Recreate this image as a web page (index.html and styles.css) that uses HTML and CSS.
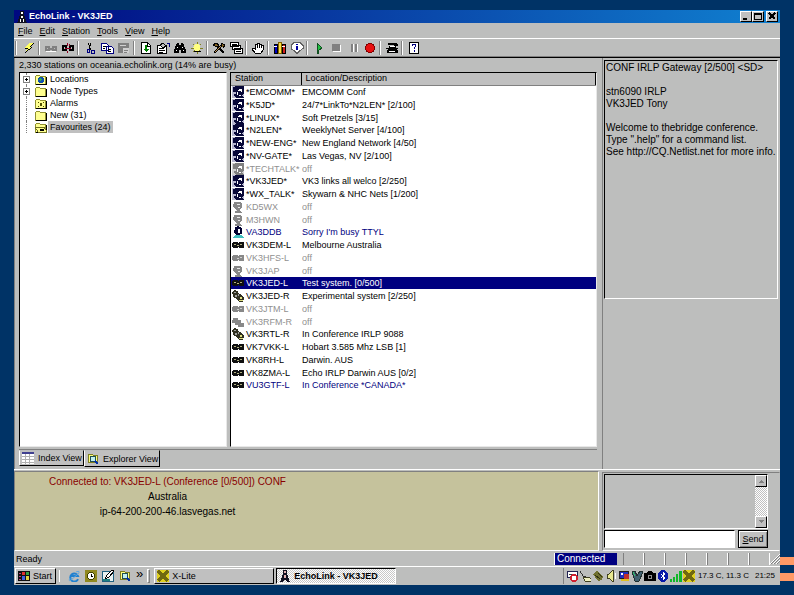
FILE: index.html
```html
<!DOCTYPE html>
<html lang="en">
<head>
<meta charset="utf-8">
<title>EchoLink - VK3JED</title>
<link rel="stylesheet" href="styles.css">
</head>
<body>
<svg class="sprite" aria-hidden="true">
  <symbol id="bolt" viewBox="0 0 14 12"><path d="M8 1h4L9 5h2L3 11l2-4H3z" fill="#000"/><path d="M7 1h4L8 5h2L4 9l2-3H3z" fill="#ffff60"/></symbol>
  <symbol id="chain-off" viewBox="0 0 14 12"><path d="M2 5h3v3H2zM9 5h3v3H9zM5 6.500h4" fill="none" stroke="#808080" stroke-width="2"/><path d="M2 9h10" stroke="#fff"/></symbol>
  <symbol id="chain-cut" viewBox="0 0 14 12"><path d="M2 4h3v4H2zM9 4h3v4H9z" fill="none" stroke="#000" stroke-width="2"/><path d="M4 6h6M6 1l1 3M9 2L8 4M6 11V9" stroke="#900020"/></symbol>
  <symbol id="cut" viewBox="0 0 14 12"><path d="M5 1l3 7M8 1L6 7" stroke="#000"/><path d="M4 7h2v3H4zM8 8h3v3H8z" fill="none" stroke="#000080"/></symbol>
  <symbol id="copy" viewBox="0 0 14 12"><path d="M1 1h5l2 2v5H1zM6 4h5l2 2v5H6z" fill="#fff" stroke="#000080"/><path d="M3 4h3M3 6h2M8 7h3M8 9h3" stroke="#000"/></symbol>
  <symbol id="paste" viewBox="0 0 14 12"><path d="M1 1h11v10H1z" fill="#808080"/><path d="M3 3h6v1H3zM6 6h6v5H6z" fill="#d0d0d0"/><path d="M7 8h4M7 10h3" stroke="#808080"/></symbol>
  <symbol id="page" viewBox="0 0 14 12"><path d="M2.500 .5h6l3 3v8h-9z" fill="#fff" stroke="#000"/><path d="M8.500 1v3h3" stroke="#000" fill="none"/><path d="M6 3h2v4h2L7 10 4 7h2z" fill="#008000"/></symbol>
  <symbol id="props" viewBox="0 0 14 12"><path d="M1.500 3.500h9v8h-9z" fill="#fff" stroke="#000"/><path d="M3 6h5M3 8h6M3 10h4M4 3l3-2 3 3-3 2z" stroke="#000" fill="#c0c0c0"/><path d="M11 1h2v4" stroke="#000080" fill="none"/></symbol>
  <symbol id="find" viewBox="0 0 14 12"><path d="M4 1h2v2h2V1h2l3 7v3H8V8H6v3H1V8z" fill="#000"/><path d="M3 8h1M4 5h1M9 5h1M10 8h1" stroke="#fff"/></symbol>
  <symbol id="alarm" viewBox="0 0 14 12"><path d="M7 0v12M1 6h12M3 2l8 8M11 2l-8 8" stroke="#808020"/><circle cx="7" cy="5.500" r="3.500" fill="#ffff80"/><path d="M4 9h7" stroke="#000"/></symbol>
  <symbol id="tools" viewBox="0 0 14 12"><path d="M2 11l8-8M4 3l8 8" stroke="#000" stroke-width="2"/><path d="M1 3l3-2 3 2-2 2zM9 1l4 2-2 3" fill="#806020" stroke="#000"/><path d="M3 10l6-6" stroke="#c09050"/></symbol>
  <symbol id="windows" viewBox="0 0 14 12"><path d="M1.500 .5h8v4h-8zM3.500 3.500h8v4h-8zM5.500 6.500h8v5h-8z" fill="#fff" stroke="#000"/><path d="M3 2.500h5M7 9.500h5" stroke="#000"/></symbol>
  <symbol id="hand" viewBox="0 0 14 12"><path d="M4 11L1 7l1-1 2 1V2h2V1h2v1h2v1h2v5l-2 3z" fill="#fff" stroke="#000"/><path d="M6 2v4M8 2v4M10 3v3" stroke="#000"/></symbol>
  <symbol id="books" viewBox="0 0 14 12"><path d="M1 2h3v9H1z" fill="#0000c0" stroke="#000"/><path d="M5 0h3v11H5z" fill="#ffe040" stroke="#806000"/><path d="M9 2h3v9H9z" fill="#d02020" stroke="#000"/><path d="M1 4h3M9 4h3" stroke="#fff"/></symbol>
  <symbol id="info" viewBox="0 0 14 12"><path d="M4 .5h6l3 3v3l-4 3-2 2-2-2-4-3v-3z" fill="#fff" stroke="#606060"/><path d="M6 2h2v1H6zM6 4h2v4H6z" fill="#0000a0"/></symbol>
  <symbol id="play" viewBox="0 0 14 12"><path d="M5 1l5 5-4 3v3H5z" fill="#20c040" stroke="#105020"/></symbol>
  <symbol id="stop" viewBox="0 0 14 12"><path d="M4 3h8v7H4z" fill="#fff"/><path d="M3 2h8v7H3z" fill="#808080"/></symbol>
  <symbol id="pause" viewBox="0 0 14 12"><path d="M5 2h2v8H5zM9 2h2v8H9z" fill="#808080"/><path d="M7 2h1v8H7zM11 2h1v8h-1z" fill="#fff"/></symbol>
  <symbol id="record" viewBox="0 0 14 12"><circle cx="7" cy="6" r="4.500" fill="#e81010" stroke="#800000"/></symbol>
  <symbol id="phone" viewBox="0 0 14 12"><path d="M3 3V1h8l2 2v1H9V3zM1 6h12v1H1zM3 7h8l2 2v2H2V9z" fill="#000"/><path d="M4 4h7v2H4z" fill="#000"/><path d="M5 4.500h5M4 9.500h6" stroke="#fff"/></symbol>
  <symbol id="help" viewBox="0 0 14 12"><path d="M2.500 .5h9v11h-9z" fill="#fff" stroke="#000"/><path d="M5 2h4v1H5zM5 3h1v1H5zM8 3h1v2H8zM7 5h1v2H7zM7 8h1v2H7z" fill="#000080"/></symbol>

  <symbol id="folder" viewBox="0 0 12 11"><path d="M.5 2.500l1-1h3l1 1h5v8H.5z" fill="#ffff90" stroke="#909030"/><path d="M11.500 3v7.500H1" stroke="#000" fill="none"/></symbol>
  <symbol id="folder-globe" viewBox="0 0 12 11"><use href="#folder"/><circle cx="6" cy="6" r="3" fill="#1050b0"/><path d="M5 4l2 1-1 3-2-2z" fill="#30b050"/></symbol>
  <symbol id="folder-alarm" viewBox="0 0 12 11"><use href="#folder"/><path d="M3 4h1v1H3zM8 4h1v1H8zM5 5h2v3H5zM3 8h1v1H3zM8 8h1v1H8z" fill="#505000"/></symbol>
  <symbol id="folder-open" viewBox="0 0 12 11"><use href="#folder"/><path d="M0 5h9l3 5H3z" fill="#ffff90" stroke="#707020"/><path d="M5 7h4v2H5z" fill="#000"/></symbol>

  <symbol id="conf" viewBox="0 0 12 12"><path d="M0 0h12v12H0z" fill="#b8b8d0"/><path d="M3 0h9v8l-2 1 2 3H4L2 10V8h2V6H1V1h2z" fill="#080838"/><path d="M7 3h2l1 1v2H9L8 5H6z" fill="#fff"/><path d="M5 6h1v3H5zM7 9h2v1H7z" fill="#fff"/></symbol>
  <symbol id="conf-off" viewBox="0 0 12 12"><path d="M0 0h12v12H0z" fill="#d0d0d0"/><path d="M3 0h9v8l-2 1 2 3H4L2 10V8h2V6H1V1h2z" fill="#808080"/><path d="M7 3h2l1 1v2H9L8 5H6zM5 6h1v3H5zM7 9h2v1H7z" fill="#fff"/></symbol>
  <symbol id="user-off" viewBox="0 0 12 12"><path d="M2 1h6l2 2v4L8 8v1l2 3H3l1-3-1-2-2-1z" fill="#888"/><path d="M5 3h3v1H5zM6 6h2v1H6zM4 9h1v1H4z" fill="#e8e8e8"/></symbol>
  <symbol id="user" viewBox="0 0 12 12"><path d="M3 1l3-1 4 2v6H8L7 9H5L2 7z" fill="#000030"/><path d="M6 3h2v4H6z" fill="#fff"/><path d="M1 12l2-3h6l3 3z" fill="#40c0c0"/></symbol>
  <symbol id="link" viewBox="0 0 12 12"><path d="M1 3h4l1 1 1-1h4l1 1v4l-1 1H7L6 8 5 9H1L0 8V4z" fill="#101010"/><path d="M2 5h2v1H2zM5 6h2v1H5zM8 5h2v1H8z" fill="#b0b080"/></symbol>
  <symbol id="link-off" viewBox="0 0 12 12"><path d="M1 3h4l1 1 1-1h4l1 1v4l-1 1H7L6 8 5 9H1L0 8V4z" fill="#888"/><path d="M5 6h2v1H5zM8 5h2v1H8z" fill="#d0d0d0"/></symbol>
  <symbol id="radio" viewBox="0 0 12 12"><path d="M0 2l2-2 4 1 1 3 3 1 2 3-1 4H7L5 9 2 8z" fill="#303020"/><path d="M2 2h2v1H2zM3 5h2v2H3zM6 4h1v2H6z" fill="#a0a0a0"/><path d="M8 7h2v2H8zM7 10h4v1H7z" fill="#e0e080"/></symbol>
  <symbol id="radio-off" viewBox="0 0 12 12"><path d="M1 2h5v2h3v3h3v4H6V9H3V7H0z" fill="#888"/></symbol>

  <symbol id="app" viewBox="0 0 12 12"><path d="M4 0h4v4l3 8H8L6 9l-2 3H1l3-8z" fill="#101020"/><path d="M5 1h2v2H5zM5 5h2v3H5z" fill="#e0b0b0"/></symbol>
  <symbol id="app-light" viewBox="0 0 12 12"><path d="M4 0h4v4l3 8H1l3-8z" fill="#101020"/><path d="M5 1h2v2H5zM5 5h2v2H5zM4 8h1v3H4zM7 8h1v3H7z" fill="#fff"/></symbol>
  <symbol id="grid" viewBox="0 0 12 12"><path d="M0 0h12v12H0z" fill="#fff"/><path d="M0 0h12v2H0z" fill="#404090"/><path d="M0 4.500h12M0 7.500h12M0 10.500h12M3.500 2v10M7.500 2v10" stroke="#b0b0b0"/></symbol>
  <symbol id="explore" viewBox="0 0 12 12"><path d="M1 1h4l1 1h4v7H1z" fill="#ffff80" stroke="#808020"/><circle cx="6" cy="6" r="3" fill="#c0f0f0" stroke="#205050"/><path d="M8 8l3 3" stroke="#0030a0" stroke-width="2"/></symbol>
  <symbol id="winflag" viewBox="0 0 12 12"><path d="M0 1h12v10H0z" fill="#101010"/><path d="M4 2h3v3H4z" fill="#e03030"/><path d="M8 2h3v3H8z" fill="#30a040"/><path d="M4 6h3v4H4z" fill="#4060e0"/><path d="M8 6h3v4H8z" fill="#e0d040"/><path d="M1 3h2M1 6h2M1 9h2" stroke="#c04080"/></symbol>
  <symbol id="ie" viewBox="0 0 12 12"><g shape-rendering="auto"><path d="M10 9A4 4 0 1 1 10 6H3" fill="none" stroke="#2080d0" stroke-width="2"/><path d="M2 8Q0 12 3 10L10 4Q13 0 8 2" fill="none" stroke="#60a8e0"/></g></symbol>
  <symbol id="outlook" viewBox="0 0 12 12"><path d="M0 0h12v12H0z" fill="#908820"/><circle cx="6" cy="6" r="3.500" fill="#fff" stroke="#404000"/><path d="M6 4v2h2" fill="none" stroke="#000"/></symbol>
  <symbol id="desk" viewBox="0 0 12 12"><path d="M.5 1.500h11v10H.5z" fill="#e8f0f0" stroke="#206080"/><path d="M3 9l2-4 5-5 2 1-5 6z" fill="#fff" stroke="#000"/><path d="M1 10h7" stroke="#208080" stroke-width="2"/></symbol>
  <symbol id="xlite" viewBox="0 0 12 12"><path d="M0 0h12v12H0z" fill="#e0d020"/><path d="M1 1l10 10M11 1L1 11" stroke="#706810" stroke-width="3"/></symbol>
  <symbol id="t-cal" viewBox="0 0 12 12"><path d="M1 1h10v6H1z" fill="#fff" stroke="#202050"/><path d="M3 4h6" stroke="#404040"/><circle cx="8" cy="8" r="3" fill="#fff" stroke="#d02030" stroke-width="1.500"/></symbol>
  <symbol id="t-modem" viewBox="0 0 12 12"><path d="M1 1l3 5 3 1" fill="none" stroke="#303030"/><path d="M4 7h6l2 2v2H6z" fill="#f0f0c0" stroke="#404020"/></symbol>
  <symbol id="t-plug" viewBox="0 0 12 12"><path d="M1 4l4-3 6 5-1 4-4 1z" fill="#707030"/><path d="M3 5l5 4M6 3l4 4" stroke="#303010"/></symbol>
  <symbol id="t-speaker" viewBox="0 0 12 12"><path d="M2 4h2l4-4v12L4 8H2z" fill="#e8e890" stroke="#404020"/><path d="M10 3v6" stroke="#fff"/></symbol>
  <symbol id="t-pc" viewBox="0 0 12 12"><path d="M1 1h9v7H1z" fill="#2030c0" stroke="#202020"/><path d="M3 3h2v2H3z" fill="#fff"/><path d="M6 4h5v5H6z" fill="#c03030"/><path d="M3 10h8" stroke="#e0c020" stroke-width="2"/></symbol>
  <symbol id="t-pen" viewBox="0 0 12 12"><path d="M1 2l3-1 2 5 3-5 3 1-4 9H4z" fill="#406070" stroke="#203030"/><path d="M2 2l2 4" stroke="#30c070"/></symbol>
  <symbol id="t-camera" viewBox="0 0 12 12"><path d="M0 3h3l1-2h4l1 2h3v8H0z" fill="#000"/><circle cx="6" cy="7" r="2" fill="none" stroke="#909090"/></symbol>
  <symbol id="t-bt" viewBox="0 0 12 12"><ellipse cx="6" cy="6" rx="5" ry="6" fill="#0818a8"/><path d="M4 4l4 4-2 2V2l2 2-4 4" fill="none" stroke="#fff"/></symbol>
  <symbol id="t-signal" viewBox="0 0 12 12"><path d="M0 9h2v3H0zM3 7h2v5H3zM6 4h2v8H6zM9 1h3v11H9z" fill="#10b828"/></symbol>
</svg>

<div class="window">
  <header class="title">
    <svg><use href="#app-light"/></svg>
    <h1>EchoLink - VK3JED</h1>
    <button aria-label="Minimize"><svg viewBox="0 0 10 9"><path d="M2 7h4" stroke="#000" stroke-width="2"/></svg></button>
    <button aria-label="Maximize"><svg viewBox="0 0 10 9"><path d="M1.500 1.500h7v6h-7zM1 2h8" fill="none" stroke="#000"/></svg></button>
    <button class="close" aria-label="Close"><svg viewBox="0 0 10 9"><path d="M2 1l6 6M8 1L2 7" stroke="#000" stroke-width="2"/></svg></button>
  </header>

  <nav class="menu">
    <a href="#"><u>F</u>ile</a><a href="#"><u>E</u>dit</a><a href="#"><u>S</u>tation</a><a href="#"><u>T</u>ools</a><a href="#"><u>V</u>iew</a><a href="#"><u>H</u>elp</a>
  </nav>

  <div class="toolbar">
    <i></i>
    <button aria-label="Connect"><svg><use href="#bolt"/></svg></button>
    <i></i>
    <button aria-label="Link"><svg><use href="#chain-off"/></svg></button>
    <button aria-label="Disconnect"><svg><use href="#chain-cut"/></svg></button>
    <i></i>
    <button aria-label="Cut"><svg><use href="#cut"/></svg></button>
    <button aria-label="Copy"><svg><use href="#copy"/></svg></button>
    <button aria-label="Paste"><svg><use href="#paste"/></svg></button>
    <i></i>
    <button aria-label="Refresh"><svg><use href="#page"/></svg></button>
    <button aria-label="Properties"><svg><use href="#props"/></svg></button>
    <button aria-label="Find"><svg><use href="#find"/></svg></button>
    <button aria-label="Alarms"><svg><use href="#alarm"/></svg></button>
    <i></i>
    <button aria-label="Setup"><svg><use href="#tools"/></svg></button>
    <button aria-label="Preferences"><svg><use href="#windows"/></svg></button>
    <i></i>
    <button aria-label="Busy"><svg><use href="#hand"/></svg></button>
    <i></i>
    <button aria-label="Statistics"><svg><use href="#books"/></svg></button>
    <button aria-label="Information"><svg><use href="#info"/></svg></button>
    <i></i>
    <button aria-label="Play"><svg><use href="#play"/></svg></button>
    <button aria-label="Stop"><svg><use href="#stop"/></svg></button>
    <button aria-label="Pause"><svg><use href="#pause"/></svg></button>
    <button aria-label="Record"><svg><use href="#record"/></svg></button>
    <i></i>
    <button aria-label="Dial pad"><svg><use href="#phone"/></svg></button>
    <i></i>
    <button aria-label="Help"><svg><use href="#help"/></svg></button>
  </div>

  <main>
    <section class="stations">
      <p class="count">2,330 stations on oceania.echolink.org (14% are busy)</p>
      <div class="panes">
        <ul class="tree">
          <li><b></b><svg><use href="#folder-globe"/></svg><span>Locations</span></li>
          <li><b></b><svg><use href="#folder"/></svg><span>Node Types</span></li>
          <li><svg><use href="#folder-alarm"/></svg><span>Alarms</span></li>
          <li><svg><use href="#folder"/></svg><span>New (31)</span></li>
          <li><svg><use href="#folder-open"/></svg><span class="picked">Favourites (24)</span></li>
        </ul>
        <div class="list">
          <table>
            <thead><tr><th>Station</th><th>Location/Description</th></tr></thead>
            <tbody>
              <tr><td><svg><use href="#conf"/></svg>*EMCOMM*</td><td>EMCOMM Conf</td></tr>
              <tr><td><svg><use href="#conf"/></svg>*K5JD*</td><td>24/7*LinkTo*N2LEN* [2/100]</td></tr>
              <tr><td><svg><use href="#conf"/></svg>*LINUX*</td><td>Soft Pretzels [3/15]</td></tr>
              <tr><td><svg><use href="#conf"/></svg>*N2LEN*</td><td>WeeklyNet Server [4/100]</td></tr>
              <tr><td><svg><use href="#conf"/></svg>*NEW-ENG*</td><td>New England Network [4/50]</td></tr>
              <tr><td><svg><use href="#conf"/></svg>*NV-GATE*</td><td>Las Vegas, NV [2/100]</td></tr>
              <tr class="off"><td><svg><use href="#conf-off"/></svg>*TECHTALK*</td><td>off</td></tr>
              <tr><td><svg><use href="#conf"/></svg>*VK3JED*</td><td>VK3 links all welco [2/250]</td></tr>
              <tr><td><svg><use href="#conf"/></svg>*WX_TALK*</td><td>Skywarn &amp; NHC Nets [1/200]</td></tr>
              <tr class="off"><td><svg><use href="#user-off"/></svg>KD5WX</td><td>off</td></tr>
              <tr class="off"><td><svg><use href="#user-off"/></svg>M3HWN</td><td>off</td></tr>
              <tr class="busy"><td><svg><use href="#user"/></svg>VA3DDB</td><td>Sorry I'm busy TTYL</td></tr>
              <tr><td><svg><use href="#link"/></svg>VK3DEM-L</td><td>Melbourne Australia</td></tr>
              <tr class="off"><td><svg><use href="#link-off"/></svg>VK3HFS-L</td><td>off</td></tr>
              <tr class="off"><td><svg><use href="#user-off"/></svg>VK3JAP</td><td>off</td></tr>
              <tr class="selected"><td><svg><use href="#link"/></svg>VK3JED-L</td><td>Test system. [0/500]</td></tr>
              <tr><td><svg><use href="#radio"/></svg>VK3JED-R</td><td>Experimental system [2/250]</td></tr>
              <tr class="off"><td><svg><use href="#link-off"/></svg>VK3JTM-L</td><td>off</td></tr>
              <tr class="off"><td><svg><use href="#radio-off"/></svg>VK3RFM-R</td><td>off</td></tr>
              <tr><td><svg><use href="#radio"/></svg>VK3RTL-R</td><td>In Conference IRLP 9088</td></tr>
              <tr><td><svg><use href="#link"/></svg>VK7VKK-L</td><td>Hobart 3.585 Mhz LSB [1]</td></tr>
              <tr><td><svg><use href="#link"/></svg>VK8RH-L</td><td>Darwin. AUS</td></tr>
              <tr><td><svg><use href="#link"/></svg>VK8ZMA-L</td><td>Echo IRLP Darwin AUS [0/2]</td></tr>
              <tr class="busy"><td><svg><use href="#link"/></svg>VU3GTF-L</td><td>In Conference *CANADA*</td></tr>
            </tbody>
          </table>
        </div>
      </div>
      <div class="tabs">
        <button><svg><use href="#grid"/></svg>Index View</button>
        <button class="current"><svg><use href="#explore"/></svg>Explorer View</button>
      </div>
    </section>
    <aside class="info">
      <div class="message">
        <p>CONF IRLP Gateway [2/500] &lt;SD&gt;</p>
        <p>stn6090 IRLP<br>VK3JED Tony</p>
        <p>Welcome to thebridge conference.<br>Type ".help" for a command list.<br>See http://CQ.Netlist.net for more info.</p>
      </div>
    </aside>
  </main>

  <div class="lower">
    <section class="connection">
      <p class="peer">Connected to: VK3JED-L (Conference [0/500]) CONF</p>
      <p>Australia</p>
      <p>ip-64-200-200-46.lasvegas.net</p>
    </section>
    <form class="chat">
      <div class="log">
        <div class="scroll"><button type="button" aria-label="Scroll up"><svg viewBox="0 0 8 8"><path d="M1 6h6L4 3z" fill="#808080"/></svg></button><button type="button" aria-label="Scroll down"><svg viewBox="0 0 8 8"><path d="M1 2h6L4 5z" fill="#808080"/></svg></button></div>
      </div>
      <div class="entry"><input type="text" aria-label="Message"><button type="button"><u>S</u>end</button></div>
    </form>
  </div>

  <footer class="status">
    <span class="ready">Ready</span>
    <span class="state">Connected</span>
    <span></span><span></span><span></span><span></span><span></span><span></span><span></span>
    <svg viewBox="0 0 10 10"><path d="M1 10l9-9M4 10l6-6M7 10l3-3" stroke="#808080"/><path d="M0 10l10-10M3 10l7-7M6 10l4-4" stroke="#fff"/></svg>
  </footer>

  <nav class="taskbar">
    <button class="start"><svg><use href="#winflag"/></svg>Start</button>
    <div class="quick">
      <svg><use href="#ie"/></svg><svg><use href="#outlook"/></svg><svg><use href="#desk"/></svg><svg><use href="#explore"/></svg><span>»</span>
    </div>
    <i></i>
    <button class="task"><svg><use href="#xlite"/></svg>X-Lite</button>
    <button class="task active"><svg><use href="#app"/></svg>EchoLink - VK3JED</button>
    <div class="tray">
      <svg><use href="#t-cal"/></svg><svg><use href="#t-modem"/></svg><svg><use href="#t-plug"/></svg><svg><use href="#t-speaker"/></svg><svg><use href="#t-pc"/></svg><svg><use href="#t-pen"/></svg><svg><use href="#t-camera"/></svg><svg><use href="#t-bt"/></svg><svg><use href="#t-signal"/></svg><svg><use href="#xlite"/></svg>
      <span>17.3 C, 11.3 C</span><time>21:25</time>
    </div>
  </nav>
</div>
<div class="edge"><i></i><i></i></div>
</body>
</html>
```
FILE: styles.css
```css
* { box-sizing: border-box; }
body {
  margin: 0;
  height: 100vh;
  display: flex;
  background: #003366;
  color: #000;
  font: 9px/12px "Liberation Sans", sans-serif;
  padding: 10px 0 10px 14px;
}
p, ul, h1 { margin: 0; padding: 0; list-style: none; }
button, input { font: inherit; color: inherit; margin: 0; padding: 0; border-radius: 0; }
button {
  background: #c0c0c0;
  border: 1px solid;
  border-color: #fff #000 #000 #fff;
  display: flex;
  align-items: center;
  white-space: nowrap;
}
svg { width: 12px; height: 12px; flex: none; shape-rendering: crispEdges; }
.sprite { display: none; }

.window { flex: 1; min-width: 0; display: flex; flex-direction: column; background: #bdbebd; }

.title {
  height: 13px;
  display: flex;
  align-items: center;
  padding: 0 2px;
  background: linear-gradient(90deg, #000880, #0838a0 40%, #1080d0);
  color: #fff;
}
.title h1 { flex: 1; margin-left: 1px; font-size: 9px; line-height: 13px; }
.title button { width: 12px; height: 11px; }
.title button svg { width: 10px; height: 9px; }
.title .close { margin-left: 2px; }

.menu { height: 16px; display: flex; gap: 7px; padding: 2px 4px; border-bottom: 1px solid #fff; }
.menu a { color: inherit; text-decoration: none; }

.toolbar { height: 18px; display: flex; align-items: center; border-bottom: 1px solid #808080; }
.toolbar i { width: 2px; height: 14px; margin: 0 2px 0 1px; border-left: 1px solid #808080; border-right: 1px solid #fff; }
.toolbar button { width: 17px; height: 16px; border: 0; background: none; justify-content: center; }
.toolbar svg { width: 14px; height: 12px; }
.toolbar i:first-child { margin-right: 3px; }

main { flex: 1; min-height: 0; display: flex; border-top: 1px solid #000; }
.stations { flex: 1; min-width: 0; display: flex; flex-direction: column; padding-left: 4px; border-left: 1px solid #808080; }
.count { height: 14px; padding-top: 1px; }
.panes { flex: 1; min-height: 0; display: flex; gap: 3px; }
.tree, .list { background: #fff; border: 1px solid; border-color: #000 #e8e8e8 #e8e8e8 #000; }
.tree { flex: 0 0 36%; padding: 0 2px; }
.tree li { display: flex; align-items: center; height: 12px; padding-left: 8px; gap: 1px; margin-left: 4px; border-left: 1px dotted #808080; }
.tree b { width: 7px; height: 7px; margin: 0 4px 0 -12px; border: 1px solid #808080; background: linear-gradient(#000, #000) center / 3px 1px no-repeat, linear-gradient(#000, #000) center / 1px 3px no-repeat, #fff; }
.tree svg { height: 11px; }
.tree span { padding: 0 2px; }
.tree .picked { background: #c0c0c0; }
.list { flex: 1; min-width: 0; overflow: hidden; }
table { width: 100%; border-collapse: collapse; table-layout: fixed; }
th { height: 12px; padding: 0 4px; line-height: 11px; text-align: left; font-weight: normal; background: #c0c0c0; border-right: 1px solid #000; border-bottom: 1px solid #808080; }
th:first-child { width: 70px; }
tbody tr { height: 13px; }
tbody tr:nth-child(4n) { height: 12px; }
td { padding: 0 1px; line-height: 12px; white-space: nowrap; }
td svg { margin-right: 2px; vertical-align: top; }
.off { color: #909090; }
.busy { color: #000080; }
.selected { background: #000080; color: #fff; }
.tabs { display: flex; align-items: flex-start; height: 20px; border-top: 1px solid #808080; margin-top: 2px; }
.tabs button { height: 16px; gap: 4px; padding: 0 1px 0 2px; border-color: #bdbebd #000 #000 #fff; }
.tabs .current { height: 17px; border-top-color: #bdbebd; }

.info { flex: 0 0 178px; min-width: 0; margin-left: 5px; padding: 2px 2px 2px 1px; border-left: 1px solid #808080; }
.message { height: 239px; padding: 1px; border: 1px solid; border-color: #000 #fff #fff #000; overflow: hidden; white-space: nowrap; font-size: 10px; }
.message p { margin-bottom: 12px; }

.lower { height: 82px; display: flex; border-top: 1px solid #fff; }
.connection { flex: 1; padding: 2px 0 0; margin-top: 1px; background: #c5c29c; border: 1px solid; border-color: #808080 #fff #fff #808080; font-size: 10px; line-height: 15px; }
.connection p { text-align: center; padding-right: 278px; }
.connection .peer { color: #880000; }
.chat { flex: 0 0 178px; display: flex; flex-direction: column; margin: 2px 0 0 3px; padding: 1px 11px 2px 1px; border: 1px solid; border-color: #808080 #bdbebd #fff #808080; }
.log { flex: 1; display: flex; justify-content: flex-end; border: 1px solid; border-color: #000 #fff #fff #000; }
.scroll { width: 12px; display: flex; flex-direction: column; justify-content: space-between; background: repeating-conic-gradient(#fff 0 25%, #c0c0c0 0 50%) 0 0 / 2px 2px; }
.scroll button { height: 12px; }
.scroll svg { width: 10px; height: 8px; }
.entry { display: flex; gap: 3px; height: 18px; margin-top: 1px; }
.entry input { flex: 1; min-width: 0; background: #fff; border: 1px solid; border-color: #000 #fff #fff #000; }
.entry button { display: block; width: 30px; border: 1px solid #000; box-shadow: inset 1px 1px #fff, inset -1px -1px #808080; }

.status { height: 15px; display: flex; align-items: center; padding: 1px 0; }
.status .ready { flex: 1; padding-left: 2px; }
.status span { height: 12px; border-right: 1px solid #fff; }
.status span:nth-child(n+3) { width: 21px; border-left: 1px solid #808080; }
.status .state { width: 62px; padding-left: 2px; margin-right: 6px; background: #000080; color: #fff; font-size: 10px; border: 0; }
.status svg { width: 10px; height: 10px; }

.taskbar { height: 19px; display: flex; align-items: center; padding: 1px 0 1px 1px; border-top: 1px solid #fff; }
.taskbar button { height: 16px; gap: 3px; padding: 0 2px; }
.taskbar .start { width: 41px; }
.quick { display: flex; align-items: center; gap: 5px; margin-left: 3px; padding-left: 8px; border-left: 1px solid #fff; }
.quick span { font-size: 13px; line-height: 8px; padding-bottom: 4px; }
.taskbar i { width: 3px; height: 14px; margin: 0 4px; border: 1px solid; border-color: #fff #808080 #808080 #fff; }
.task { width: 120px; margin-right: 2px; }
.taskbar .active { border-color: #000 #fff #fff #000; background: repeating-conic-gradient(#fff 0 25%, #c8c8c8 0 50%) 0 0 / 2px 2px; font-weight: bold; }
.tray { margin-left: auto; height: 16px; display: flex; align-items: center; gap: 1px; padding: 0 5px 0 2px; border-left: 1px solid #808080; white-space: nowrap; font-size: 8px; }
.tray span { margin-left: 2px; }
.tray time { margin-left: 5px; }

.edge { flex: 0 0 14px; display: flex; flex-direction: column; justify-content: flex-end; gap: 8px; padding-bottom: 4px; }
.edge i { height: 8px; background: #ff9966; }
```
